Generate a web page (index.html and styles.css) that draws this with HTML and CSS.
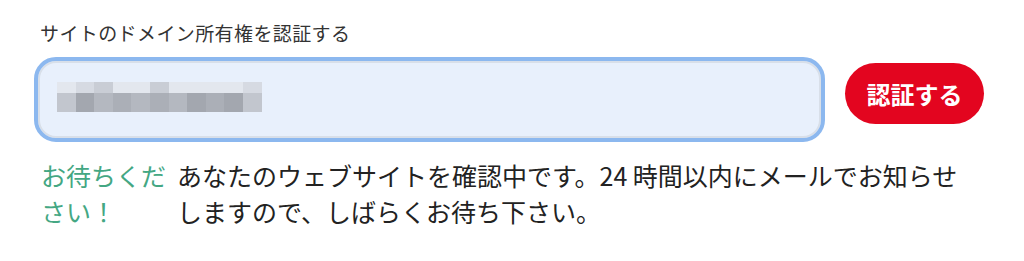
FILE: index.html
```html
<!DOCTYPE html>
<html lang="ja">
<head>
<meta charset="utf-8">
<link rel="stylesheet" href="styles.css">
</head>
<body>
<div class="page">
  <div class="label">サイトのドメイン所有権を認証する</div>
  <div class="row">
    <div class="field">
      <div class="mosaic">
        <span class="c1"></span><span class="c2"></span><span class="c3"></span><span class="c1"></span><span class="c1"></span><span class="c3"></span><span class="c1"></span><span class="c1"></span><span class="c1"></span><span class="c1"></span><span class="c2"></span>
        <span class="d1"></span><span class="d3"></span><span class="d2"></span><span class="d4"></span><span class="d2"></span><span class="d4"></span><span class="d2"></span><span class="d3"></span><span class="d4"></span><span class="d3"></span><span class="d1"></span>
      </div>
    </div>
    <button class="btn">認証する</button>
  </div>
  <div class="status">
    <div class="wait">お待ちください！</div>
    <div class="msg">あなたのウェブサイトを確認中です。24 時間以内にメールでお知らせしますので、しばらくお待ち下さい。</div>
  </div>
</div>
</body>
</html>
```

FILE: styles.css
```css
html, body {
  margin: 0;
  padding: 0;
  background: #ffffff;
}
body {
  font-family: "Noto Sans CJK JP", "Noto Sans", sans-serif;
}
.page {
  padding: 21px 0 0 34px;
}
.label {
  margin-left: 6px;
  font-size: 19px;
  letter-spacing: 0.4px;
  line-height: 24px;
  color: #333333;
}
.row {
  display: flex;
  align-items: flex-start;
  margin-top: 12px;
}
.field {
  box-sizing: border-box;
  width: 791px;
  height: 85px;
  border: 4px solid #8cb8ef;
  border-radius: 22px;
  background: #e8f0fc;
  box-shadow: inset 0 0 0 2px #d8dfe9;
  padding: 21px 0 0 19px;
}
.mosaic {
  display: grid;
  grid-template-columns: repeat(11, 18.6px);
  grid-template-rows: 11px 19px;
  width: 205px;
}
.c1 { background: #e3e7ee; }
.c2 { background: #d6dae2; }
.c3 { background: #c9cdd5; }
.d1 { background: #c2c6ce; }
.d2 { background: #b4b8c0; }
.d3 { background: #a3a7af; }
.d4 { background: #abafb7; }
.btn {
  margin: 6px 0 0 20px;
  width: 139px;
  height: 61px;
  border: none;
  border-radius: 31px;
  background: #e3051f;
  color: #ffffff;
  font-family: "Noto Sans CJK JP", sans-serif;
  font-size: 24px;
  font-weight: 700;
  padding: 0;
}
.status {
  display: flex;
  margin: 15px 0 0 7px;
  font-size: 25px;
  line-height: 36px;
}
.wait {
  width: 129px;
  flex: none;
  color: #44a783;
  margin-right: 7px;
}
.msg {
  width: 800px;
  color: #222222;
}
```
